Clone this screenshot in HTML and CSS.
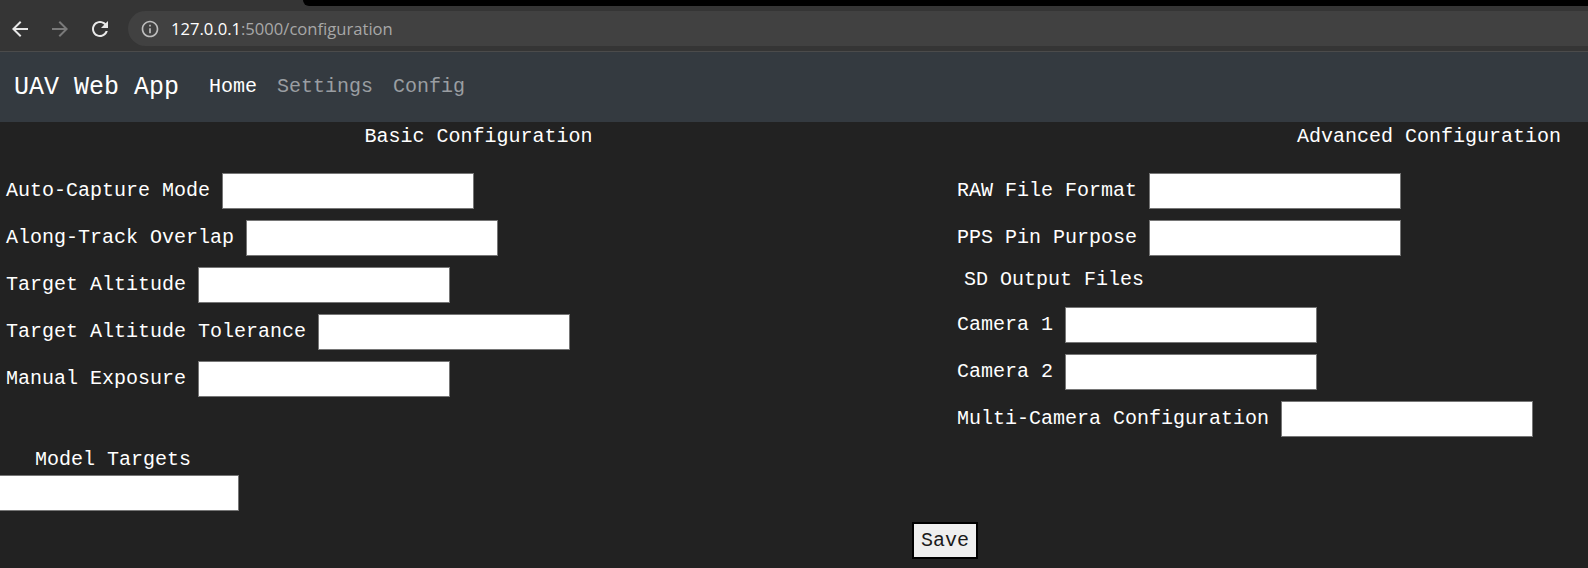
FILE: index.html
```html
<!DOCTYPE html>
<html lang="en">
<head>
<meta charset="utf-8">
<title>UAV Web App - Configuration</title>
<link rel="stylesheet" href="styles.css">
</head>
<body>
<div class="chrome">
  <div class="tabstrip"><div class="tab"></div><div class="strip-rest"></div></div>
  <div class="toolbar">
    <div class="navbtns">
      <svg class="ico back" viewBox="0 0 24 24" width="24" height="24"><path d="M20 11H7.83l5.59-5.59L12 4l-8 8 8 8 1.41-1.41L7.83 13H20v-2z"/></svg>
      <svg class="ico fwd" viewBox="0 0 24 24" width="24" height="24"><path d="M12 4l-1.41 1.41L16.17 11H4v2h12.17l-5.58 5.59L12 20l8-8z"/></svg>
      <svg class="ico reload" viewBox="0 0 24 24" width="24" height="24"><path d="M17.65 6.35C16.2 4.9 14.21 4 12 4c-4.42 0-7.990 3.58-7.99 8s3.57 8 7.99 8c3.73 0 6.84-2.55 7.73-6h-2.08c-.82 2.33-3.04 4-5.650 4-3.31 0-6-2.69-6-6s2.69-6 6-6c1.66 0 3.14.69 4.22 1.78L13 11h7V4l-2.35 2.35z"/></svg>
    </div>
    <div class="omnibox">
      <svg class="info" viewBox="0 0 24 24" width="20" height="20"><path d="M11 7h2v2h-2zm0 4h2v6h-2zm1-9C6.48 2 2 6.48 2 12s4.48 10 10 10 10-4.48 10-10S17.52 2 12 2zm0 18c-4.41 0-8-3.59-8-8s3.59-8 8-8 8 3.59 8 8-3.59 8-8 8z"/></svg>
      <span class="url"><span class="host">127.0.0.1</span><span class="path">:5000/configuration</span></span>
    </div>
  </div>
</div>

<nav class="navbar">
  <span class="brand">UAV Web App</span>
  <a class="nav-link active" href="#">Home</a>
  <a class="nav-link" href="#">Settings</a>
  <a class="nav-link" href="#">Config</a>
</nav>

<main class="content">
  <form class="form">
    <section class="col col-basic">
      <h2 class="col-title">Basic Configuration</h2>
      <div class="fields">
        <div class="field"><label>Auto-Capture Mode</label><input type="text"></div>
        <div class="field"><label>Along-Track Overlap</label><input type="text"></div>
        <div class="field"><label>Target Altitude</label><input type="text"></div>
        <div class="field"><label>Target Altitude Tolerance</label><input type="text"></div>
        <div class="field"><label>Manual Exposure</label><input type="text"></div>
      </div>
      <div class="model">
        <h3 class="model-title">Model Targets</h3>
        <input type="text">
      </div>
    </section>
    <section class="col col-adv">
      <h2 class="col-title">Advanced Configuration</h2>
      <div class="fields">
        <div class="field"><label>RAW File Format</label><input type="text"></div>
        <div class="field"><label>PPS Pin Purpose</label><input type="text"></div>
        <h3 class="subhead">SD Output Files</h3>
        <div class="field"><label>Camera 1</label><input type="text"></div>
        <div class="field"><label>Camera 2</label><input type="text"></div>
        <div class="field"><label>Multi-Camera Configuration</label><input type="text"></div>
      </div>
    </section>
  </form>
  <div class="actions"><button type="button" class="save">Save</button></div>
</main>
</body>
</html>
```

FILE: styles.css
```css
html, body {
  margin: 0;
  padding: 0;
  background: #222222;
  overflow: hidden;
}

body {
  font-family: "Liberation Mono", "Courier New", monospace;
  color: #ffffff;
}

/* ---------- browser chrome ---------- */
.chrome {
  background: #323232;
}

.tabstrip {
  display: flex;
  height: 6px;
  background: #353535;
}

.tab {
  width: 303px;
}

.strip-rest {
  flex: 1;
  background: #000000;
  border-bottom-left-radius: 7px;
}

.toolbar {
  display: flex;
  align-items: center;
  height: 45px;
  padding-left: 8px;
  background: #353535;
  border-bottom: 1px solid #4b4b4b;
  overflow: hidden;
}

.navbtns {
  display: flex;
  gap: 16px;
}

.ico {
  display: block;
  fill: #e8e8e8;
}

.ico.fwd {
  fill: #7a7a7a;
}

.omnibox {
  flex: 1;
  display: flex;
  align-items: center;
  gap: 11px;
  height: 35px;
  margin-left: 16px;
  padding-left: 12px;
  background: #414141;
  border-radius: 18px 0 0 18px;
}

.info {
  display: block;
  fill: #bdbdbd;
}

.url {
  font-family: "Open Sans", "Noto Sans", sans-serif;
  font-size: 16.6px;
}

.host {
  color: #ffffff;
}

.path {
  color: #a8a8a8;
}

/* ---------- navbar ---------- */
.navbar {
  display: flex;
  align-items: center;
  height: 70px;
  padding: 0 14px;
  background: #343a40;
}

.brand {
  font-size: 25px;
  line-height: 30px;
  margin-right: 20px;
  margin-top: 2px;
  color: #ffffff;
}

.nav-link {
  font-size: 20px;
  line-height: 24px;
  padding: 0 10px;
  color: #9a9ea2;
  text-decoration: none;
}

.nav-link.active {
  color: #ffffff;
}

/* ---------- content ---------- */
.content {
  padding-top: 3px;
}

.form {
  display: grid;
  grid-template-columns: 957px 1fr;
  margin: 0;
}

.col-title {
  margin: 0;
  font-size: 20px;
  line-height: 24px;
  font-weight: normal;
  text-align: center;
}

.col-adv .col-title {
  text-align: right;
  padding-right: 27px;
}

.fields {
  display: flex;
  flex-direction: column;
  gap: 11px;
  margin-top: 24px;
}

.col-basic .fields {
  padding-left: 6px;
}

.field {
  display: flex;
  align-items: center;
  gap: 12px;
  height: 36px;
}

label {
  font-size: 20px;
  line-height: 24px;
  white-space: pre;
}

input {
  box-sizing: border-box;
  width: 252px;
  height: 36px;
  margin: 0;
  padding: 1px 2px;
  background: #ffffff;
  border: 1px solid #767676;
  border-radius: 0;
}

.subhead {
  margin: 1px 0 4px;
  padding-left: 7px;
  font-size: 20px;
  line-height: 24px;
  font-weight: normal;
}

.model {
  display: flex;
  flex-direction: column;
  align-items: center;
  width: 226px;
  margin-top: 51px;
}

.model-title {
  margin: 0 0 3px;
  font-size: 20px;
  line-height: 24px;
  font-weight: normal;
}

.model input {
  flex-shrink: 0;
  width: 252px;
  height: 36px;
}

.actions {
  display: flex;
  justify-content: flex-end;
  width: 978px;
  margin-top: 11px;
}

.save {
  box-sizing: border-box;
  height: 37px;
  padding: 0 7px;
  font-family: "Liberation Mono", "Courier New", monospace;
  font-size: 20px;
  line-height: 24px;
  color: #1a1a1a;
  background: #efefef;
  border: 2px solid #000000;
  border-radius: 0;
}
```
